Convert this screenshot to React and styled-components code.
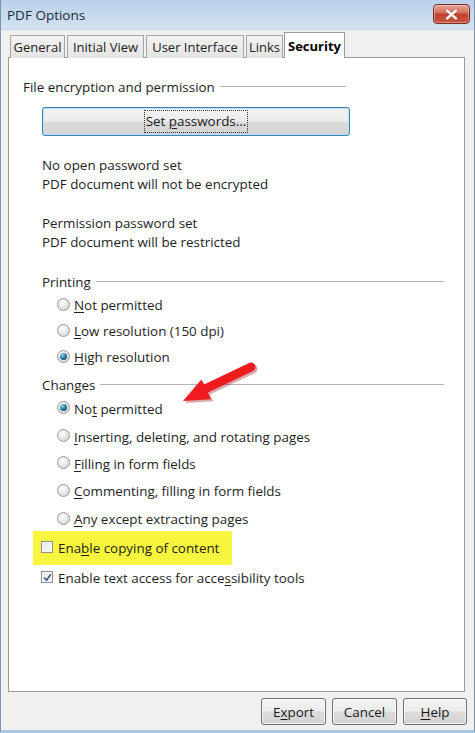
import React from "react";
import styled, { createGlobalStyle, css } from "styled-components";

const GlobalStyle = createGlobalStyle`
  html, body { margin: 0; padding: 0; background: #f0f0f0; }
  body { font-family: "Open Sans", "Noto Sans", sans-serif; color: #1e1e1e; }
  * { box-sizing: border-box; }
`;

const Window = styled.div`
  width: 475px;
  height: 733px;
  display: flex;
  flex-direction: column;
  background: #f0f0f0;
  border: 1px solid #7d93ad;
  border-top: none;
  border-bottom: 3px solid #a9c6de;
  overflow: hidden;
`;

const TitleBar = styled.div`
  height: 30px;
  flex: none;
  display: flex;
  align-items: center;
  justify-content: space-between;
  padding: 0 4px 0 6px;
  background: linear-gradient(#b9d1ea, #c9dcef 60%, #d3e3f3);
  border-bottom: 1px solid #c6d6e6;
`;

const Title = styled.span`
  font-size: 13.5px;
  color: #1c2a3a;
  margin-top: 1px;
`;

const CloseButton = styled.div`
  width: 37px;
  height: 20px;
  margin-top: -1px;
  border: 1px solid #7a2a22;
  border-radius: 4px;
  background: linear-gradient(#e6a394, #d46c5a 45%, #c2412d 50%, #c9553f);
  display: flex;
  align-items: center;
  justify-content: center;
  box-shadow: inset 0 0 0 1px rgba(255, 255, 255, 0.35);
`;

const Body = styled.div`
  flex: 1;
  display: flex;
  flex-direction: column;
  padding: 3px 9px 0 7px;
`;

const TabStrip = styled.div`
  display: flex;
  align-items: flex-end;
  gap: 2px;
  height: 25px;
  padding-left: 2px;
  position: relative;
  z-index: 1;
  margin-bottom: -1px;
`;

const Tab = styled.div`
  width: ${(p) => p.$w}px;
  height: 23px;
  border: 1px solid #a5a5a5;
  border-bottom: none;
  background: linear-gradient(#f2f2f2, #e4e4e4);
  font-size: 13px;
  display: flex;
  align-items: center;
  justify-content: center;
  color: #222;
  ${(p) =>
    p.$active &&
    css`
      height: 26px;
      margin-left: -1px;
      background: #fff;
      font-weight: 700;
      color: #000;
      border-color: #9a9a9a;
    `}
`;

const Panel = styled.div`
  position: relative;
  height: 635px;
  background: #fff;
  border: 1px solid #9a9a9a;
  padding: 19px 0 0 14px;
  font-size: 13.4px;
`;

const Legend = styled.div`
  width: ${(p) => p.$w}px;
  height: 20px;
  display: flex;
  align-items: center;
  gap: 5px;
  margin-top: ${(p) => p.$mt || 0}px;
  &::after {
    content: "";
    flex: 1;
    height: 1px;
    background: #b4b4b4;
    margin-top: -1px;
  }
`;

const Indent = styled.div`
  margin-left: 19px;
  display: flex;
  flex-direction: column;
`;

const PushButton = styled.div`
  width: ${(p) => p.$w}px;
  height: ${(p) => p.$h}px;
  margin-top: ${(p) => p.$mt || 0}px;
  border: 1px solid ${(p) => (p.$focus ? "#3c7fb1" : "#707070")};
  border-radius: 3px;
  background: linear-gradient(#f4f4f4, #ececec 48%, #dcdcdc 52%, #d2d2d2);
  box-shadow: inset 0 0 0 1px
    ${(p) => (p.$focus ? "rgba(180, 225, 250, 0.9)" : "rgba(255,255,255,0.7)")};
  display: flex;
  align-items: center;
  justify-content: center;
  font-size: 13.4px;
  color: #1a1a1a;
`;

const FocusLabel = styled.span`
  outline: 1px dotted #333;
  padding: 1px 1px 2px;
`;

const InfoText = styled.div`
  line-height: 19px;
  margin-top: ${(p) => p.$mt}px;
`;

const Row = styled.label`
  height: ${(p) => p.$h}px;
  display: flex;
  align-items: center;
  gap: ${(p) => p.$gap || 4}px;
  padding-left: ${(p) => p.$pl || 0}px;
`;

const Radio = styled.span`
  width: 13px;
  height: 13px;
  border-radius: 50%;
  border: 1px solid #9a9a9a;
  background: radial-gradient(circle at 40% 35%, #ffffff, #d8d8d8 75%, #c8c8c8);
  display: flex;
  align-items: center;
  justify-content: center;
  flex: none;
  margin-top: -2px;
  &::after {
    content: "";
    display: ${(p) => (p.$checked ? "block" : "none")};
    width: 7px;
    height: 7px;
    border-radius: 50%;
    background: radial-gradient(circle at 35% 30%, #8fd6f2, #1f6d96 55%, #0d3f5e);
  }
`;

const CheckRow = styled.div`
  width: 199px;
  height: ${(p) => p.$h}px;
  margin-left: 10px;
  margin-top: ${(p) => p.$mt || 0}px;
  padding-left: 8px;
  display: flex;
  align-items: center;
  gap: 5px;
  background: ${(p) => (p.$highlight ? "#f8f53e" : "transparent")};
  white-space: nowrap;
`;

const Check = styled.span`
  width: 12px;
  height: 12px;
  border: 1px solid #8e8f8f;
  background: linear-gradient(135deg, #e6e6e6, #f8f8f8);
  box-shadow: inset 0 0 0 1px #f4f4f4;
  display: flex;
  align-items: center;
  justify-content: center;
  flex: none;
  margin-top: -2px;
`;

const U = styled.span`
  text-decoration: underline;
  text-underline-offset: 2px;
`;

const Arrow = styled.svg`
  position: absolute;
  left: 166px;
  top: 301px;
  overflow: visible;
`;

const ButtonBar = styled.div`
  display: flex;
  justify-content: flex-end;
  gap: 6px;
  padding-top: 6px;
  margin-right: -2px;
`;

const printing = [
  { pre: "", u: "N", post: "ot permitted" },
  { pre: "", u: "L", post: "ow resolution (150 dpi)" },
  { pre: "", u: "H", post: "igh resolution", checked: true },
];

const changes = [
  { pre: "No", u: "t", post: " permitted", checked: true, h: 27 },
  { pre: "", u: "I", post: "nserting, deleting, and rotating pages", h: 29 },
  { pre: "", u: "F", post: "illing in form fields", h: 25 },
  { pre: "", u: "C", post: "ommenting, filling in form fields", h: 30 },
  { pre: "", u: "A", post: "ny except extracting pages", h: 26 },
];

const Label = ({ pre, u, post }) => (
  <span>
    {pre}
    <U>{u}</U>
    {post}
  </span>
);

export default function App() {
  return (
    <>
      <GlobalStyle />
      <Window>
        <TitleBar>
          <Title>PDF Options</Title>
          <CloseButton>
            <svg width="13" height="11" viewBox="0 0 13 11">
              <path
                d="M2 1.5 L11 9.5 M11 1.5 L2 9.5"
                stroke="#5a1a12"
                strokeWidth="3.6"
                strokeLinecap="round"
                opacity="0.35"
              />
              <path
                d="M2 1.5 L11 9.5 M11 1.5 L2 9.5"
                stroke="#ffffff"
                strokeWidth="2.4"
                strokeLinecap="round"
              />
            </svg>
          </CloseButton>
        </TitleBar>
        <Body>
          <TabStrip>
            <Tab $w={55}>General</Tab>
            <Tab $w={77}>Initial View</Tab>
            <Tab $w={98}>User Interface</Tab>
            <Tab $w={37}>Links</Tab>
            <Tab $w={61} $active>
              Security
            </Tab>
          </TabStrip>
          <Panel>
            <Legend $w={323}>File encryption and permission</Legend>
            <Indent>
              <PushButton $w={308} $h={29} $mt={10} $focus>
                <FocusLabel>
                  Set <U>p</U>asswords...
                </FocusLabel>
              </PushButton>
              <InfoText $mt={20}>
                No open password set
                <br />
                PDF document will not be encrypted
              </InfoText>
              <InfoText $mt={20}>
                Permission password set
                <br />
                PDF document will be restricted
              </InfoText>
              <Legend $w={402} $mt={20}>
                Printing
              </Legend>
              {printing.map((r, i) => (
                <Row key={i} $h={26} $pl={15}>
                  <Radio $checked={r.checked} />
                  <Label {...r} />
                </Row>
              ))}
              <Legend $w={402} $mt={5}>
                Changes
              </Legend>
              {changes.map((r, i) => (
                <Row key={i} $h={r.h} $pl={15}>
                  <Radio $checked={r.checked} />
                  <Label {...r} />
                </Row>
              ))}
            </Indent>
            <CheckRow $h={34} $highlight $mt={-1}>
              <Check />
              <span>
                Ena<U>b</U>le copying of content
              </span>
            </CheckRow>
            <CheckRow $h={26}>
              <Check>
                <svg width="9" height="9" viewBox="0 0 9 9">
                  <path
                    d="M1.2 4.6 L3.6 7.2 L7.8 1.2"
                    fill="none"
                    stroke="#3a5b7c"
                    strokeWidth="1.6"
                  />
                </svg>
              </Check>
              <span>
                Enable text access for acce<U>s</U>sibility tools
              </span>
            </CheckRow>
            <Arrow width="85" height="50" viewBox="0 0 85 50">
              <g transform="translate(2 2)" fill="#8c0d10" opacity="0.35">
                <path d="M30 30 L76 8" stroke="#8c0d10" strokeWidth="9" strokeLinecap="round" />
                <polygon points="8,42 26.4,20.6 36.2,40.2" />
              </g>
              <path d="M30 30 L76 8" stroke="#ee1c1f" strokeWidth="9" strokeLinecap="round" />
              <polygon points="8,42 26.4,20.6 36.2,40.2" fill="#ee1c1f" />
            </Arrow>
          </Panel>
          <ButtonBar>
            <PushButton $w={65} $h={27}>
              E<U>x</U>port
            </PushButton>
            <PushButton $w={65} $h={27}>
              Cancel
            </PushButton>
            <PushButton $w={64} $h={27}>
              <U>H</U>elp
            </PushButton>
          </ButtonBar>
        </Body>
      </Window>
    </>
  );
}
